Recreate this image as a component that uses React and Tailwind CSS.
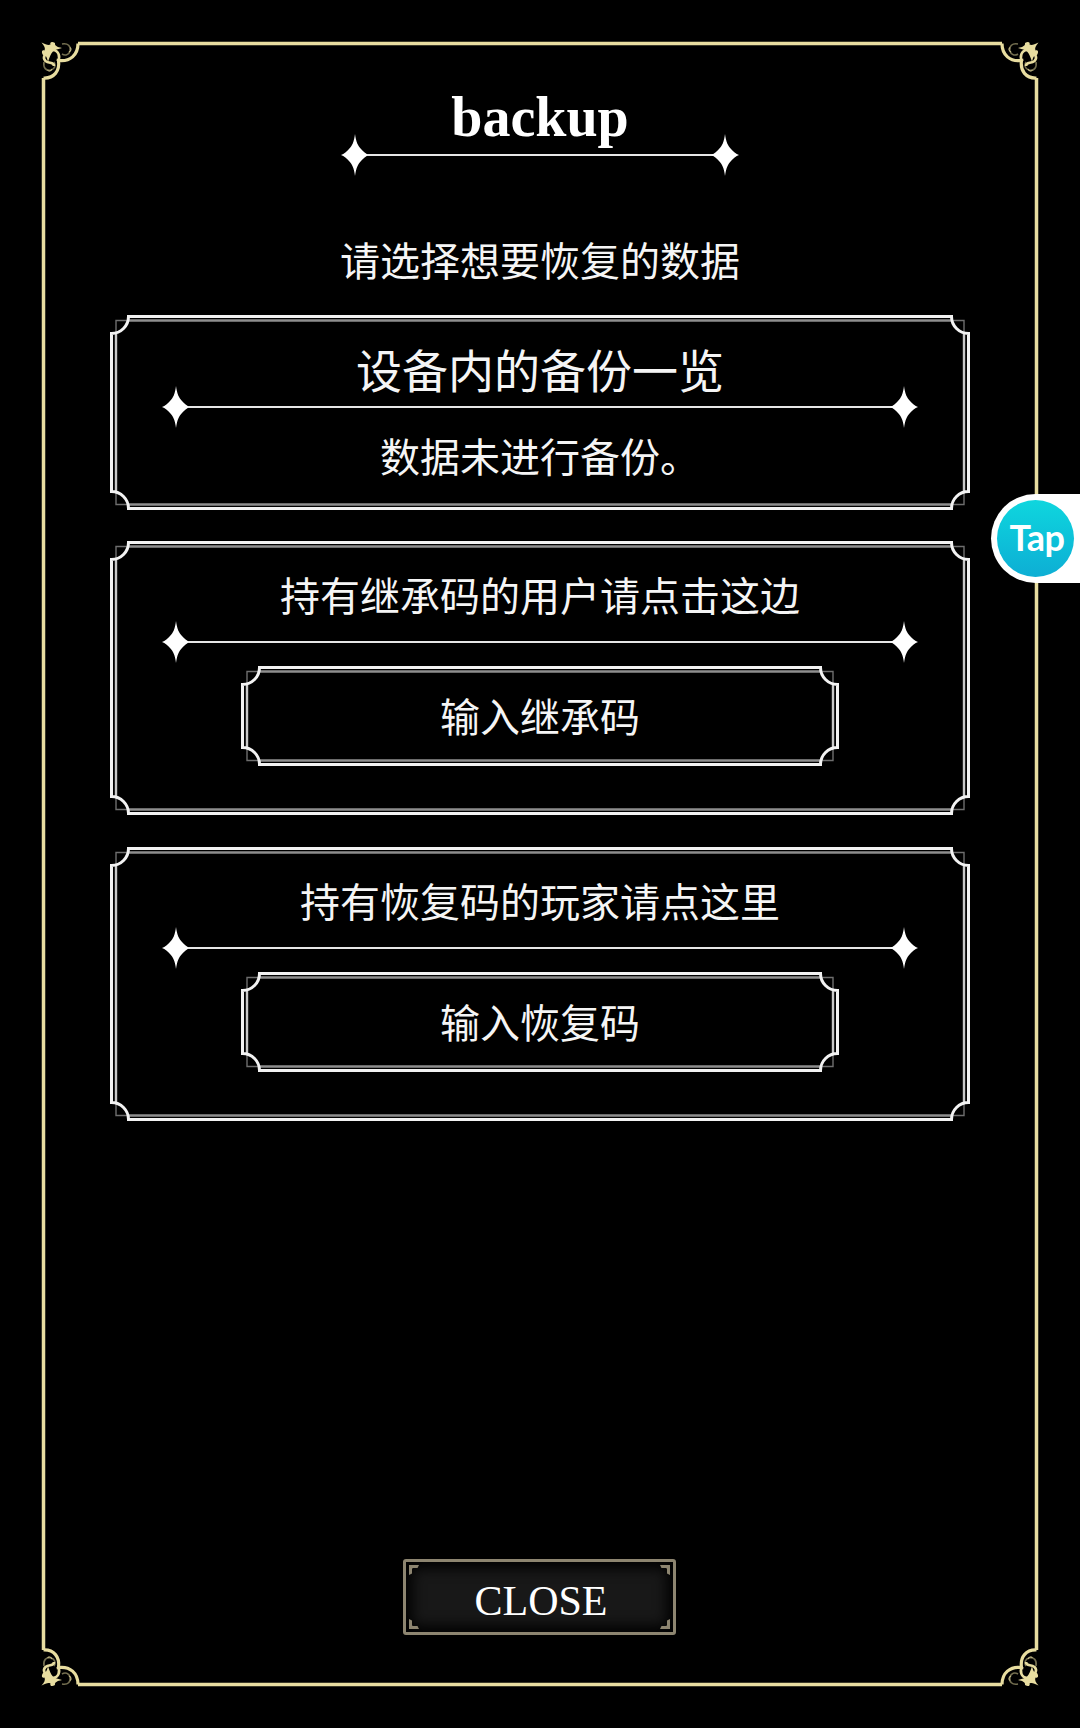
const GOLD = '#e8dda0'

function Corner({ transform }) {
  return (
    <g transform={transform} fill="none" stroke={GOLD}>
      <path d="M78 43.5C78 55 70 62 58.5 60.5C60 71 54 78.5 43.5 78" strokeWidth="3.2" />
      {/* fleur */}
      <path d="M41.5 42.5C46 44.5 48 45.5 50.5 44.5C49.5 42 52 41 55 43C54.5 45.5 57 47 62 48C57 49.5 54 50 52.5 52C51 53.5 49.5 57 48 62C47 57 45.5 54.5 43 55C41 52 42 49.5 44.5 50.5C45.5 48 44.5 46 41.5 42.5Z" fill={GOLD} stroke="none" />
      <path d="M53 50C58.5 50.5 61 57 57.5 61.5" strokeWidth="2.6" />
      <path d="M50 53C44 53 42.5 58 45.5 61C49 64 54 61.5 54 66" strokeWidth="2.6" />
      <path d="M62 44C68 43 71 46 70 51C69 55 65 56 62 54" strokeWidth="1.6" opacity="0.5" />
      <path d="M44 62C43 68 46 71 51 70C55 69 56 65 54 62" strokeWidth="1.6" opacity="0.5" />
      <path d="M70 47.5C72 49 71 51 69 52M47.5 70C49 72 51 71 52 69" strokeWidth="1.2" opacity="0.7" />
    </g>
  )
}

function PageFrame() {
  return (
    <svg className="absolute inset-0" width="1080" height="1728" viewBox="0 0 1080 1728">
      <path d="M78 43.5H1002M1036.5 78V1650M1002 1684.5H78M43.5 1650V78" fill="none" stroke={GOLD} strokeWidth="3.5" />
      <Corner />
      <Corner transform="translate(1080 0) scale(-1 1)" />
      <Corner transform="translate(0 1728) scale(1 -1)" />
      <Corner transform="translate(1080 1728) scale(-1 -1)" />
    </svg>
  )
}

function Star() {
  return (
    <svg className="shrink-0" width="28" height="42" viewBox="0 0 28 42">
      <path d="M14 0C15 8 17 12 20 15C22 17.5 25 20 28 21C25 22 22 24.5 20 27C17 30 15 34 14 42C13 34 11 30 8 27C6 24.5 3 22 0 21C3 20 6 17.5 8 15C11 12 13 8 14 0Z" fill="#fff" />
    </svg>
  )
}

function Divider({ width }) {
  return (
    <div className={`flex items-center h-[42px] ${width}`}>
      <Star />
      <div className="flex-1 -mx-[2px] h-[2px] bg-[#e6e6e6]" />
      <Star />
    </div>
  )
}

// double line box with the scooped corners
function Box({ w, h, r = 17 }) {
  const a = 1.5
  const x2 = w - 1.5
  const y2 = h - 1.5
  const s = r + 1
  return (
    <svg className="absolute inset-0" width={w} height={h} viewBox={`0 0 ${w} ${h}`} fill="none">
      <path d={`M${s} 5.5H${w - s}M${s} ${h - 5.5}H${w - s}`} stroke="#8e8e8e" strokeWidth="2.6" />
      <path d={`M6 ${s}V${h - s}M${w - 6} ${s}V${h - s}`} stroke="#c8c8c8" strokeWidth="2.4" />
      <path
        d={`M${s} 5.5H6V${s}M${w - s} 5.5H${w - 6}V${s}M${s} ${h - 5.5}H6V${h - s}M${w - s} ${h - 5.5}H${w - 6}V${h - s}`}
        stroke="#6e6e6e"
        strokeWidth="1.4"
      />
      <path
        d={`M${a + r} ${a}H${x2 - r}A${r} ${r} 0 0 0 ${x2} ${a + r}V${y2 - r}A${r} ${r} 0 0 0 ${x2 - r} ${y2}H${a + r}A${r} ${r} 0 0 0 ${a} ${y2 - r}V${a + r}A${r} ${r} 0 0 0 ${a + r} ${a}Z`}
        stroke="#f2f2f2"
        strokeWidth="3"
      />
    </svg>
  )
}

function InputButton({ children }) {
  return (
    <div className="relative w-[598px] h-[100px] flex items-center justify-center pb-[2px] mt-[3px]">
      <Box w={598} h={100} />
      <span className="relative text-[40px] leading-none">{children}</span>
    </div>
  )
}

function CodePanel({ title, button }) {
  return (
    <div className="relative w-[860px] h-[274px] flex flex-col items-center pt-[30px]">
      <Box w={860} h={274} />
      <div className="relative text-[40px] leading-[46px] mb-[4px]">{title}</div>
      <Divider width="w-[756px] relative" />
      <InputButton>{button}</InputButton>
    </div>
  )
}

function CloseCorner({ className }) {
  return (
    <svg className={`absolute w-[10px] h-[10px] ${className}`} viewBox="0 0 10 10">
      <path d="M0 0H10L8.5 3H4.5C3.5 3 3 3.5 3 4.5V8.5L0 10Z" fill="#8d8570" />
    </svg>
  )
}

export default function App() {
  return (
    <div className="relative w-[1080px] h-[1728px] overflow-hidden bg-black text-[#f5f5f5] font-['Noto_Sans_CJK_SC',sans-serif]">
      <PageFrame />

      <div className="relative h-full flex flex-col items-center pt-[100px] pb-[93px]">
        <h1 className="font-['Liberation_Serif',serif] font-bold text-[56px] leading-[34px] text-white">backup</h1>
        <Divider width="w-[398px]" />
        <p className="text-[40px] leading-[48px] mt-[59px]">请选择想要恢复的数据</p>

        <div className="relative w-[860px] h-[195px] flex flex-col items-center pt-[39px] mt-[32px]">
          <Box w={860} h={195} />
          <div className="relative text-[46px] leading-[28px] mb-[4px]">设备内的备份一览</div>
          <Divider width="w-[756px] relative" />
          <div className="relative text-[40px] leading-[54px]">数据未进行备份。</div>
        </div>

        <div className="mt-[31px]">
          <CodePanel title="持有继承码的用户请点击这边" button="输入继承码" />
        </div>
        <div className="mt-[32px]">
          <CodePanel title="持有恢复码的玩家请点这里" button="输入恢复码" />
        </div>

        <button className="relative mt-auto -left-[1px] w-[273px] h-[76px] rounded-[3px] border-[3px] border-[#8d8570] bg-[#181818] shadow-[inset_0_0_14px_6px_#000] flex items-center justify-center pt-[7px] pl-[4px] font-['Liberation_Serif',serif] text-[42px] leading-none text-white">
          <CloseCorner className="top-[3px] left-[3px]" />
          <CloseCorner className="top-[3px] right-[3px] -scale-x-100" />
          <CloseCorner className="bottom-[3px] left-[3px] -scale-y-100" />
          <CloseCorner className="bottom-[3px] right-[3px] -scale-100" />
          CLOSE
        </button>
      </div>

      {/* floating tap badge */}
      <div className="absolute left-[991px] top-[494px] w-[89px] h-[89px] bg-white rounded-l-full flex items-center pl-[6px]">
        <div className="w-[77px] h-[77px] rounded-full bg-gradient-to-b from-[#0fd6de] to-[#0eaed4] flex items-center justify-center pb-[3px] pl-[3px] font-['Lato',sans-serif] font-bold text-[36px] tracking-[-0.5px] text-white">
          Tap
        </div>
      </div>
    </div>
  )
}
